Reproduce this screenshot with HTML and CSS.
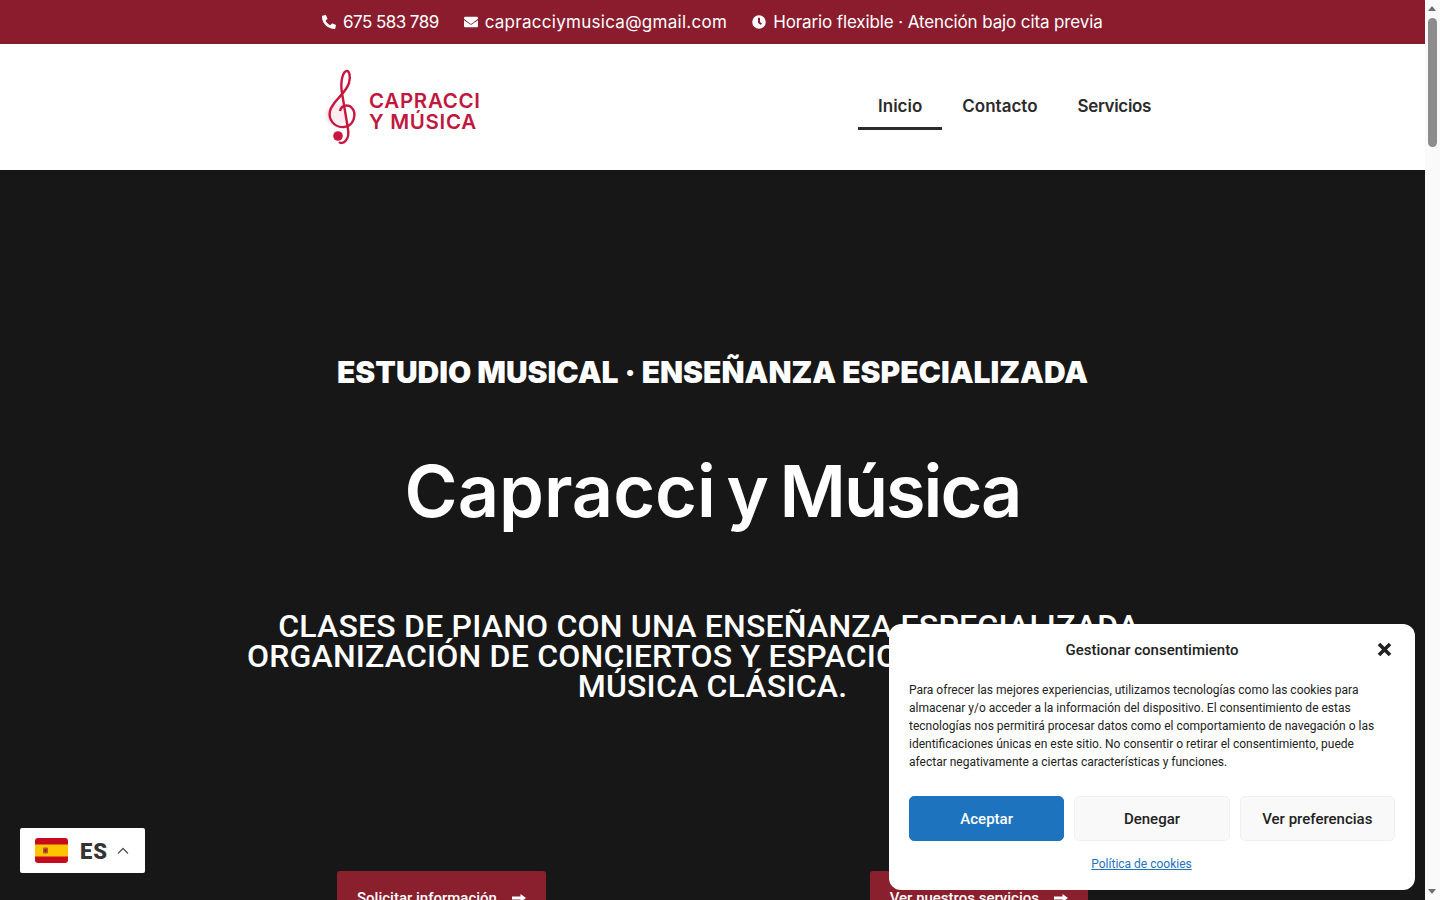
FILE: index.html
```html
<!DOCTYPE html>
<html lang="es">
  <head>
    <meta charset="UTF-8" />
    <title>Capracci y Música</title>
    <link rel="stylesheet" href="styles.css">
  </head>
  <body>
    <div class="page">
      <div class="topbar">
        <span class="top-item phone">
          <svg class="top-icon" viewBox="0 0 512 512"><path d="M493 24 389 0c-11-3-23 3-27 14l-48 112c-4 10-1 21 7 28l61 50c-36 76-98 139-175 175l-50-61c-7-8-18-11-28-7L17 359c-11 5-17 16-14 28l24 104c3 11 12 19 24 19 256 0 464-208 464-464 0-12-8-21-22-22z" transform="matrix(-1 0 0 1 512 0)"/></svg>
          675 583 789
        </span>
        <span class="top-item email">
          <svg class="top-icon" viewBox="0 0 512 512"><path d="M502 191c4-3 10 0 10 5v204c0 27-21 48-48 48H48c-27 0-48-21-48-48V196c0-5 6-8 10-5 22 17 52 39 154 113 21 15 57 48 92 48s72-33 92-48c102-74 132-96 154-113zM256 320c23 0 57-29 74-41 133-97 143-105 174-129 6-5 8-11 8-19v-19c0-27-21-48-48-48H48C21 64 0 85 0 112v19c0 8 2 14 8 19 31 24 41 32 174 129 17 12 51 41 74 41z"/></svg>
          capracciymusica@gmail.com
        </span>
        <span class="top-item hours">
          <svg class="top-icon" viewBox="0 0 512 512"><path d="M256 8a248 248 0 1 0 0 496 248 248 0 0 0 0-496zm57 350-88-64c-3-2-5-6-5-10V116c0-7 5-12 12-12h48c7 0 12 5 12 12v138l63 46c6 4 7 11 3 17l-28 39c-4 5-12 6-17 2z"/></svg>
          Horario flexible · Atención bajo cita previa
        </span>
      </div>

      <header class="header">
        <a class="logo" href="#">
          <svg class="clef" viewBox="0 0 34 76">
            <circle cx="11" cy="46" r="11" fill="#fcecef"/>
            <path class="clef-line" d="M15 42C16 36 24 35 27 39 32 45 29 57 19 58 9 59 3 50 5 42 8 31 20 26 24 14 26 7 24 2 22 2 18 2 15 12 17 24L23 60C25 72 17 76 14 73"/>
            <circle cx="13" cy="67" r="4.800" fill="#c8173f"/>
          </svg>
          <span class="logo-text">CAPRACCI<br>Y MÚSICA</span>
        </a>
        <nav class="nav">
          <a class="nav-link active" href="#">Inicio</a>
          <a class="nav-link" href="#">Contacto</a>
          <a class="nav-link services" href="#">Servicios</a>
        </nav>
      </header>

      <section class="hero">
        <h3 class="eyebrow">ESTUDIO MUSICAL · ENSEÑANZA ESPECIALIZADA</h3>
        <h1 class="title">Capracci y <span class="title-end">Música</span></h1>
        <h2 class="subtitle">Clases de piano con una enseñanza especializada,<br>organización de conciertos y espacios dedicados a la<br>música clásica.</h2>
        <div class="hero-buttons">
          <a class="btn" href="#">Solicitar información <svg class="btn-arrow" viewBox="0 0 14 10"><path d="M0 3.500h8.500V1L14 5 8.500 9V6.500H0z"/></svg></a>
          <a class="btn" href="#">Ver nuestros servicios <svg class="btn-arrow" viewBox="0 0 14 10"><path d="M0 3.500h8.500V1L14 5 8.500 9V6.500H0z"/></svg></a>
        </div>
      </section>
    </div>

    <div class="scrollbar">
      <span class="arrow-up"></span>
      <span class="thumb"></span>
      <span class="arrow-down"></span>
    </div>

    <div class="lang">
      <svg class="flag" viewBox="0 0 33 25">
        <clipPath id="flagclip"><rect width="33" height="25" rx="3"/></clipPath>
        <g clip-path="url(#flagclip)">
          <rect width="33" height="25" fill="#c60b1e"/>
          <rect y="6.500" width="33" height="12" fill="#ffc400"/>
          <rect x="8" y="9.500" width="5" height="6" rx="1" fill="#ad5a2a"/>
          <rect x="9.500" y="11" width="2" height="3" fill="#c60b1e"/>
        </g>
      </svg>
      <span class="lang-code">ES</span>
      <svg class="chevron" viewBox="0 0 12 8"><path d="M1 6.500 6 1.500l5 5"/></svg>
    </div>

    <div class="cookie">
      <div class="cookie-head">
        <span class="cookie-title">Gestionar consentimiento</span>
        <svg class="cookie-close" viewBox="0 0 15 15"><path d="M2 2l11 11M13 2 2 13"/></svg>
      </div>
      <p class="cookie-text">Para ofrecer las mejores experiencias, utilizamos tecnologías como las cookies para almacenar y/o acceder a la información del dispositivo. El consentimiento de estas tecnologías nos permitirá procesar datos como el comportamiento de navegación o las identificaciones únicas en este sitio. No consentir o retirar el consentimiento, puede afectar negativamente a ciertas características y funciones.</p>
      <div class="cookie-buttons">
        <button class="cookie-btn accept">Aceptar</button>
        <button class="cookie-btn">Denegar</button>
        <button class="cookie-btn">Ver preferencias</button>
      </div>
      <a class="cookie-link" href="#">Política de cookies</a>
    </div>
  </body>
</html>
```

FILE: styles.css
```css
html,
body {
  margin: 0;
  height: 900px;
  overflow: hidden;
}
body {
  display: flex;
  font-family: "Roboto", sans-serif;
  background-color: #fff;
}
a {
  text-decoration: none;
}
.page {
  flex: 1;
  min-width: 0;
  display: flex;
  flex-direction: column;
}
.topbar {
  height: 44px;
  box-sizing: border-box;
  padding: 0 0 1px 322px;
  background-color: #8a1c2e;
  color: #fff;
  display: flex;
  align-items: center;
  gap: 25px;
  font-family: "Inter", sans-serif;
  font-size: 17px;
  white-space: nowrap;
}
.top-item {
  display: flex;
  align-items: center;
  gap: 7px;
}
.phone {
  letter-spacing: -0.55px;
}
.email {
  letter-spacing: 0.28px;
}
.hours {
  letter-spacing: -0.12px;
}
.top-icon {
  width: 14px;
  height: 14px;
  fill: #fff;
}
.header {
  height: 126px;
  box-sizing: border-box;
  padding: 0 254px 0 325px;
  background-color: #fff;
  display: flex;
  align-items: center;
  justify-content: space-between;
}
.logo {
  display: flex;
  align-items: center;
  gap: 10px;
}
.clef {
  width: 34px;
  height: 76px;
}
.clef-line {
  fill: none;
  stroke: #c8173f;
  stroke-width: 2.400;
}
.logo-text {
  margin-top: 7px;
  font-family: "Inter", sans-serif;
  font-size: 20.500px;
  line-height: 21px;
  font-weight: 600;
  color: #c0183f;
  letter-spacing: 0.7px;
}
.nav {
  display: flex;
}
.nav-link {
  padding: 0 20px;
  height: 46px;
  line-height: 44px;
  font-family: "Inter", sans-serif;
  font-size: 17px;
  font-weight: 600;
  color: #2b2b2b;
  box-sizing: border-box;
}
.nav-link.active {
  border-bottom: 3px solid #2b2b2b;
}
.nav-link.services {
  letter-spacing: -0.35px;
}
.hero {
  flex: 1;
  background-color: #171717;
  color: #fff;
  display: flex;
  flex-direction: column;
  align-items: center;
  overflow: hidden;
  text-align: center;
}
.eyebrow {
  margin: 183px 0 0;
  font-family: "Inter", sans-serif;
  font-size: 30px;
  line-height: 38px;
  font-weight: 900;
}
.title {
  margin: 57px 0 0;
  font-family: "Inter", sans-serif;
  font-size: 72px;
  line-height: 86px;
  font-weight: 600;
  word-spacing: -7.500px;
}
.title-end {
  letter-spacing: -2px;
}
.subtitle {
  margin: 77px 0 0;
  font-size: 32px;
  line-height: 30px;
  font-weight: 500;
  letter-spacing: 0.2px;
  text-transform: uppercase;
  white-space: nowrap;
}
.hero-buttons {
  margin-top: 170px;
  width: 751px;
  display: flex;
  justify-content: space-between;
}
.btn {
  flex: none;
  display: flex;
  align-items: center;
  gap: 15px;
  height: 54px;
  padding: 0 20px;
  background-color: #8a1f2e;
  border-radius: 3px;
  color: #fff;
  font-size: 15px;
  font-weight: 500;
}
.btn-arrow {
  width: 14px;
  height: 10px;
  fill: #fff;
}
.scrollbar {
  width: 15px;
  height: 900px;
  background-color: #fafafa;
  position: relative;
  flex: none;
}
.thumb {
  position: absolute;
  left: 3px;
  top: 18px;
  width: 9px;
  height: 129px;
  border-radius: 5px;
  background-color: #8c8c8c;
}
.arrow-up,
.arrow-down {
  position: absolute;
  left: 3px;
  width: 0;
  height: 0;
  border-left: 4.500px solid transparent;
  border-right: 4.500px solid transparent;
}
.arrow-up {
  top: 6px;
  border-bottom: 5px solid #6e6e6e;
}
.arrow-down {
  bottom: 6px;
  border-top: 5px solid #6e6e6e;
}
.lang {
  position: absolute;
  left: 20px;
  top: 828px;
  width: 125px;
  height: 45px;
  box-sizing: border-box;
  padding-left: 15px;
  background-color: #fff;
  border-radius: 2px;
  display: flex;
  align-items: center;
}
.flag {
  width: 33px;
  height: 25px;
}
.lang-code {
  margin-left: 12px;
  padding-top: 1px;
  font-family: "Roboto", sans-serif;
  font-size: 22px;
  font-weight: 900;
  letter-spacing: 1px;
  color: #333;
}
.chevron {
  margin-left: 9px;
  width: 12px;
  height: 8px;
  fill: none;
  stroke: #555;
  stroke-width: 1.300;
}
.cookie {
  position: absolute;
  left: 889px;
  top: 624px;
  width: 526px;
  height: 266px;
  box-sizing: border-box;
  padding: 0 20px;
  background-color: #fff;
  border-radius: 12px;
  color: #222;
  display: flex;
  flex-direction: column;
}
.cookie-head {
  position: relative;
  height: 52px;
  display: flex;
  align-items: center;
  justify-content: center;
}
.cookie-title {
  font-size: 15px;
  font-weight: 500;
}
.cookie-close {
  position: absolute;
  right: 3px;
  top: 18px;
  width: 15px;
  height: 15px;
  fill: none;
  stroke: #222;
  stroke-width: 3.600;
}
.cookie-text {
  margin: 5px 0 0;
  max-width: 475px;
  font-size: 12px;
  line-height: 18px;
  color: #222;
}
.cookie-buttons {
  margin-top: 25px;
  display: flex;
  gap: 10px;
}
.cookie-btn {
  flex: 1;
  height: 45px;
  padding: 1px 0 0;
  border: 1px solid #f0f0f0;
  border-radius: 5px;
  background-color: #f9f9f9;
  color: #222;
  font-family: "Roboto", sans-serif;
  font-size: 15px;
  font-weight: 500;
}
.cookie-btn.accept {
  background-color: #1e73be;
  border-color: #1e73be;
  color: #fff;
}
.cookie-link {
  margin-top: 16px;
  align-self: center;
  margin-right: 21px;
  font-size: 12px;
  color: #1e73be;
  text-decoration: underline;
}
```
